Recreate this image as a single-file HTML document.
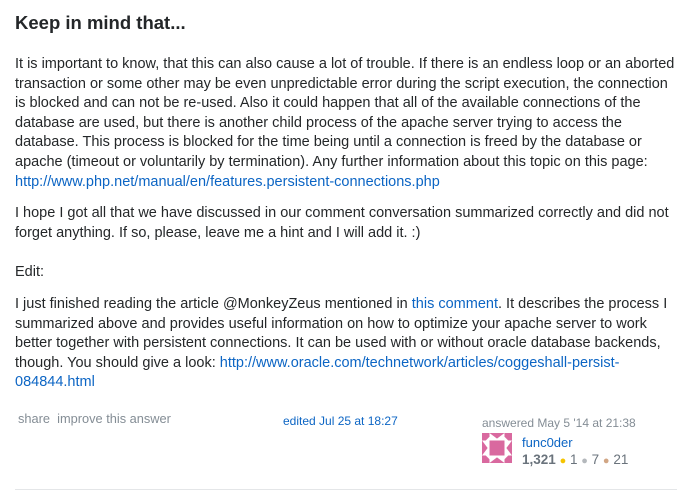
<!DOCTYPE html>
<html><head><style>
body{margin:0;background:#fff;font-family:"Liberation Sans",Arial,sans-serif;color:#242729;}
.w{position:absolute;left:15px;top:0;width:670px;}
h1{font-size:18.5px;font-weight:bold;margin:0;position:absolute;top:12px;left:0;white-space:nowrap;color:#242729}
p{font-size:14.5px;line-height:19.6px;margin:0;position:absolute;left:0;white-space:nowrap}
a{color:#0c65c4;text-decoration:none}
.s{font-size:12px;color:#848d95;position:absolute;white-space:nowrap}
</style></head><body>
<div class="w">
<h1>Keep in mind that...</h1>
<p style="top:55px">It is important to know, that this can also cause a lot of trouble. If there is an endless loop or an aborted<br>transaction or some other may be even unpredictable error during the script execution, the connection<br>is blocked and can not be re-used. Also it could happen that all of the available connections of the<br>database are used, but there is another child process of the apache server trying to access the<br>database. This process is blocked for the time being until a connection is freed by the database or<br>apache (timeout or voluntarily by termination). Any further information about this topic on this page:<br><a>http://www.php.net/manual/en/features.persistent-connections.php</a></p>
<p style="top:204px">I hope I got all that we have discussed in our comment conversation summarized correctly and did not<br>forget anything. If so, please, leave me a hint and I will add it. :)</p>
<p style="top:263px">Edit:</p>
<p style="top:295px">I just finished reading the article @MonkeyZeus mentioned in <a>this comment</a>. It describes the process I<br>summarized above and provides useful information on how to optimize your apache server to work<br>better together with persistent connections. It can be used with or without oracle database backends,<br>though. You should give a look: <a>http://www.oracle.com/technetwork/articles/coggeshall-persist-</a><br><a>084844.html</a></p>
</div>
<div class="s" style="left:18px;top:411px;font-size:12.8px">share&nbsp; improve this answer</div>
<div class="s" style="left:283px;top:414px;color:#0c65c4">edited Jul 25 at 18:27</div>
<div class="s" style="left:482px;top:416px">answered May 5 '14 at 21:38</div>
<svg style="position:absolute;left:482px;top:433px" width="30" height="30" viewBox="0 0 8 8">
<rect width="8" height="8" fill="#fff"/>
<g fill="#d9699f">
<rect x="2" y="2" width="4" height="4"/>
<polygon points="0,0 2,0 2,1 1,2 0,2"/><polygon points="8,0 6,0 6,1 7,2 8,2"/>
<polygon points="0,8 2,8 2,7 1,6 0,6"/><polygon points="8,8 6,8 6,7 7,6 8,6"/>
<polygon points="2,0 6,0 4,1.5"/><polygon points="2,8 6,8 4,6.5"/>
<polygon points="0,2 0,6 1.5,4"/><polygon points="8,2 8,6 6.5,4"/>
</g></svg>
<div class="s" style="left:522px;top:435px;color:#0c65c4;font-size:13px">func0der</div>
<div class="s" style="left:522px;top:452px;font-size:13.5px;color:#6a737c"><b>1,321</b> <span style="color:#f5c400;font-size:11px">●</span> 1 <span style="color:#b4b8bc;font-size:11px">●</span> 7 <span style="color:#d1a684;font-size:11px">●</span> 21</div>
<div style="position:absolute;left:15px;top:489px;width:662px;height:1px;background:#e4e6e8"></div>
</body></html>
